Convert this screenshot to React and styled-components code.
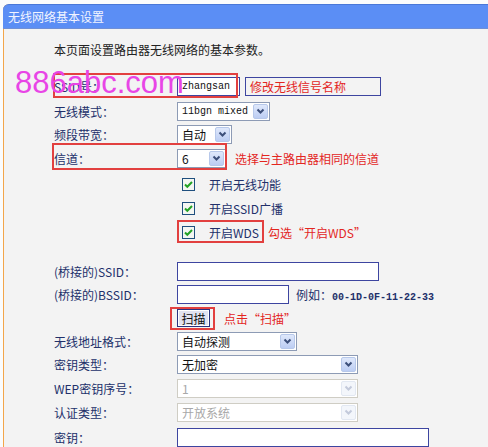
import React from "react";
import styled, { createGlobalStyle } from "styled-components";

const Global = createGlobalStyle`
  html, body {
    margin: 0;
    background: #fbfcfd;
  }
  body {
    font-family: "Noto Sans CJK SC", "Noto Sans", sans-serif;
    font-size: 12px;
  }
`;

const Page = styled.div`
  position: relative;
  width: 488px;
  height: 447px;
  overflow: hidden;
  padding: 4px 0 0 3px;
  box-sizing: border-box;
`;

const Panel = styled.div`
  background: #f3f3f3;
  border-left: 1px solid #f3a64a;
  border-top-left-radius: 6px;
  min-height: 460px;
`;

const Header = styled.div`
  height: 23px;
  display: flex;
  align-items: center;
  padding-left: 5px;
  background: #5b8ef5;
  border-top: 1px solid #4a78d8;
  border-bottom: 1px solid #6f8fd6;
  border-top-left-radius: 6px;
  margin-left: -1px;
  color: #f2f4ff;
  font-size: 12px;
`;

const Body = styled.div`
  padding: 8px 0 0 50px;
`;

const Row = styled.div`
  height: ${(p) => p.$h}px;
  margin-top: ${(p) => p.$mt || 0}px;
  display: flex;
  align-items: center;
`;

const Intro = styled.div`
  color: #222;
  font-size: 12px;
`;

const Label = styled.span`
  width: 123px;
  flex: none;
  color: #22306a;
  font-size: 12px;
  white-space: nowrap;
`;

const Marked = styled.span`
  position: relative;
  display: inline-flex;
  align-items: center;
  align-self: stretch;
  padding-right: ${(p) => p.$pr || 0}px;
  &::after {
    content: "";
    position: absolute;
    top: ${(p) => p.$t}px;
    bottom: ${(p) => p.$b}px;
    left: ${(p) => p.$l}px;
    right: ${(p) => p.$r}px;
    border: 2px solid #e2403f;
    pointer-events: none;
  }
`;

const TextBox = styled.span`
  display: inline-flex;
  align-items: center;
  box-sizing: border-box;
  width: ${(p) => p.$w}px;
  height: 19px;
  padding-left: 4px;
  background: #fff;
  border: 1px solid #3d45a0;
  font-family: "Liberation Mono", monospace;
  font-size: 10px;
  color: #111;
`;

const Select = styled.span`
  display: inline-flex;
  align-items: center;
  justify-content: space-between;
  box-sizing: border-box;
  width: ${(p) => p.$w}px;
  height: 19px;
  padding: 0 1px 0 4px;
  background: #fff;
  border: 1px solid ${(p) => (p.$off ? "#cfcdc4" : "#8d9bb5")};
  color: ${(p) => (p.$off ? "#a8a8a8" : "#111")};
  font-size: 12px;
  font-family: ${(p) =>
    p.$mono ? '"Liberation Mono", monospace' : '"Noto Sans CJK SC", sans-serif'};
  ${(p) => (p.$mono ? "font-size: 10px;" : "")}
`;

const Arrow = styled.span`
  width: 15px;
  height: 15px;
  box-sizing: border-box;
  display: flex;
  align-items: center;
  justify-content: center;
  border: 1px solid ${(p) => (p.$off ? "#e2e8f2" : "#b7c8ea")};
  background: ${(p) =>
    p.$off ? "#f3f6fb" : "linear-gradient(#dfe8fb, #bccdf3)"};
  border-radius: 2px;
`;

const Note = styled.span`
  color: #e3261f;
  font-size: 12px;
  margin-left: ${(p) => p.$ml}px;
  white-space: nowrap;
`;

const NoteBox = styled.span`
  display: inline-flex;
  align-items: center;
  box-sizing: border-box;
  height: 19px;
  width: 136px;
  margin-left: 5px;
  padding-left: 4px;
  border: 1px solid #3d45a0;
  color: #e3261f;
  font-size: 12px;
`;

const CheckLine = styled.span`
  display: inline-flex;
  align-items: center;
  padding-left: 5px;
  color: #22306a;
  font-size: 12px;
  gap: 14px;
`;

const Control = styled.span`
  display: inline-flex;
  align-items: center;
`;

const Hint = styled.span`
  margin-left: 7px;
  color: #22306a;
  font-size: 12px;
  white-space: nowrap;
`;

const Mac = styled.span`
  font-family: "Liberation Mono", monospace;
  font-size: 10px;
  font-weight: bold;
`;

const ScanButton = styled.span`
  display: inline-flex;
  align-items: center;
  justify-content: center;
  box-sizing: border-box;
  width: 33px;
  height: 18px;
  background: #e2e3f0;
  border: 1px solid #2a3380;
  box-shadow: inset 0 0 0 1px #fff;
  color: #111;
  font-size: 12px;
`;

const Watermark = styled.div`
  position: absolute;
  left: 15px;
  top: 67px;
  font-family: "Liberation Sans", Arial, sans-serif;
  font-size: 31px;
  line-height: 31px;
  color: #e845e6;
  pointer-events: none;
`;

const Chevron = ({ off }) => (
  <svg width="9" height="7" viewBox="0 0 9 7">
    <path
      d="M1.5 1.5 L4.5 4.5 L7.5 1.5"
      fill="none"
      stroke={off ? "#c3cadb" : "#3c4f7a"}
      strokeWidth="2"
    />
  </svg>
);

const Drop = ({ w, off, mono, children }) => (
  <Select $w={w} $off={off} $mono={mono}>
    <span>{children}</span>
    <Arrow $off={off}>
      <Chevron off={off} />
    </Arrow>
  </Select>
);

const Check = () => (
  <svg width="13" height="13" viewBox="0 0 13 13">
    <rect x="0.5" y="0.5" width="12" height="12" fill="#f4f6f2" stroke="#1f4f7e" />
    <path d="M3 6.5 L5.3 8.8 L10 4" fill="none" stroke="#23a225" strokeWidth="2" />
  </svg>
);

export default function App() {
  return (
    <>
      <Global />
      <Page>
        <Panel>
          <Header>无线网络基本设置</Header>
          <Body>
            <Row $h={24}>
              <Intro>本页面设置路由器无线网络的基本参数。</Intro>
            </Row>
            <Row $h={25} $mt={13}>
              <Marked $t={-1} $b={1} $l={-1} $r={2}>
                <Label>SSID号：</Label>
                <TextBox $w={63}>zhangsan</TextBox>
              </Marked>
              <NoteBox>修改无线信号名称</NoteBox>
            </Row>
            <Row $h={25}>
              <Label>无线模式：</Label>
              <Drop w={93} mono>11bgn mixed</Drop>
            </Row>
            <Row $h={21}>
              <Label>频段带宽：</Label>
              <Drop w={55}>自动</Drop>
            </Row>
            <Row $h={26}>
              <Marked $t={-2} $b={1} $l={-2} $r={-1}>
                <Label>信道：</Label>
                <Drop w={49}>6</Drop>
              </Marked>
              <Note $ml={9}>选择与主路由器相同的信道</Note>
            </Row>
            <Row $h={27}>
              <Label />
              <CheckLine>
                <Check />
                开启无线功能
              </CheckLine>
            </Row>
            <Row $h={21}>
              <Label />
              <CheckLine>
                <Check />
                开启SSID广播
              </CheckLine>
            </Row>
            <Row $h={26}>
              <Label />
              <Marked $t={1} $b={2} $l={0} $r={0} $pr={5}>
                <CheckLine>
                  <Check />
                  开启WDS
                </CheckLine>
              </Marked>
              <Note $ml={4}>勾选“开启WDS”</Note>
            </Row>
            <Row $h={24} $mt={14}>
              <Label>(桥接的)SSID：</Label>
              <TextBox $w={202} />
            </Row>
            <Row $h={23}>
              <Label>(桥接的)BSSID：</Label>
              <Control>
                <TextBox $w={112} />
                <Hint>
                  例如：<Mac>00-1D-0F-11-22-33</Mac>
                </Hint>
              </Control>
            </Row>
            <Row $h={24}>
              <Label />
              <Marked $t={1} $b={0} $l={-7} $r={-5}>
                <ScanButton>扫描</ScanButton>
              </Marked>
              <Note $ml={14}>点击“扫描”</Note>
            </Row>
            <Row $h={22}>
              <Label>无线地址格式：</Label>
              <Drop w={120}>自动探测</Drop>
            </Row>
            <Row $h={25}>
              <Label>密钥类型：</Label>
              <Drop w={181}>无加密</Drop>
            </Row>
            <Row $h={23}>
              <Label>WEP密钥序号：</Label>
              <Drop w={181} off>
                1
              </Drop>
            </Row>
            <Row $h={25}>
              <Label>认证类型：</Label>
              <Drop w={181} off>
                开放系统
              </Drop>
            </Row>
            <Row $h={25}>
              <Label>密钥：</Label>
              <TextBox $w={252} />
            </Row>
          </Body>
        </Panel>
        <Watermark>886abc.com</Watermark>
      </Page>
    </>
  );
}
